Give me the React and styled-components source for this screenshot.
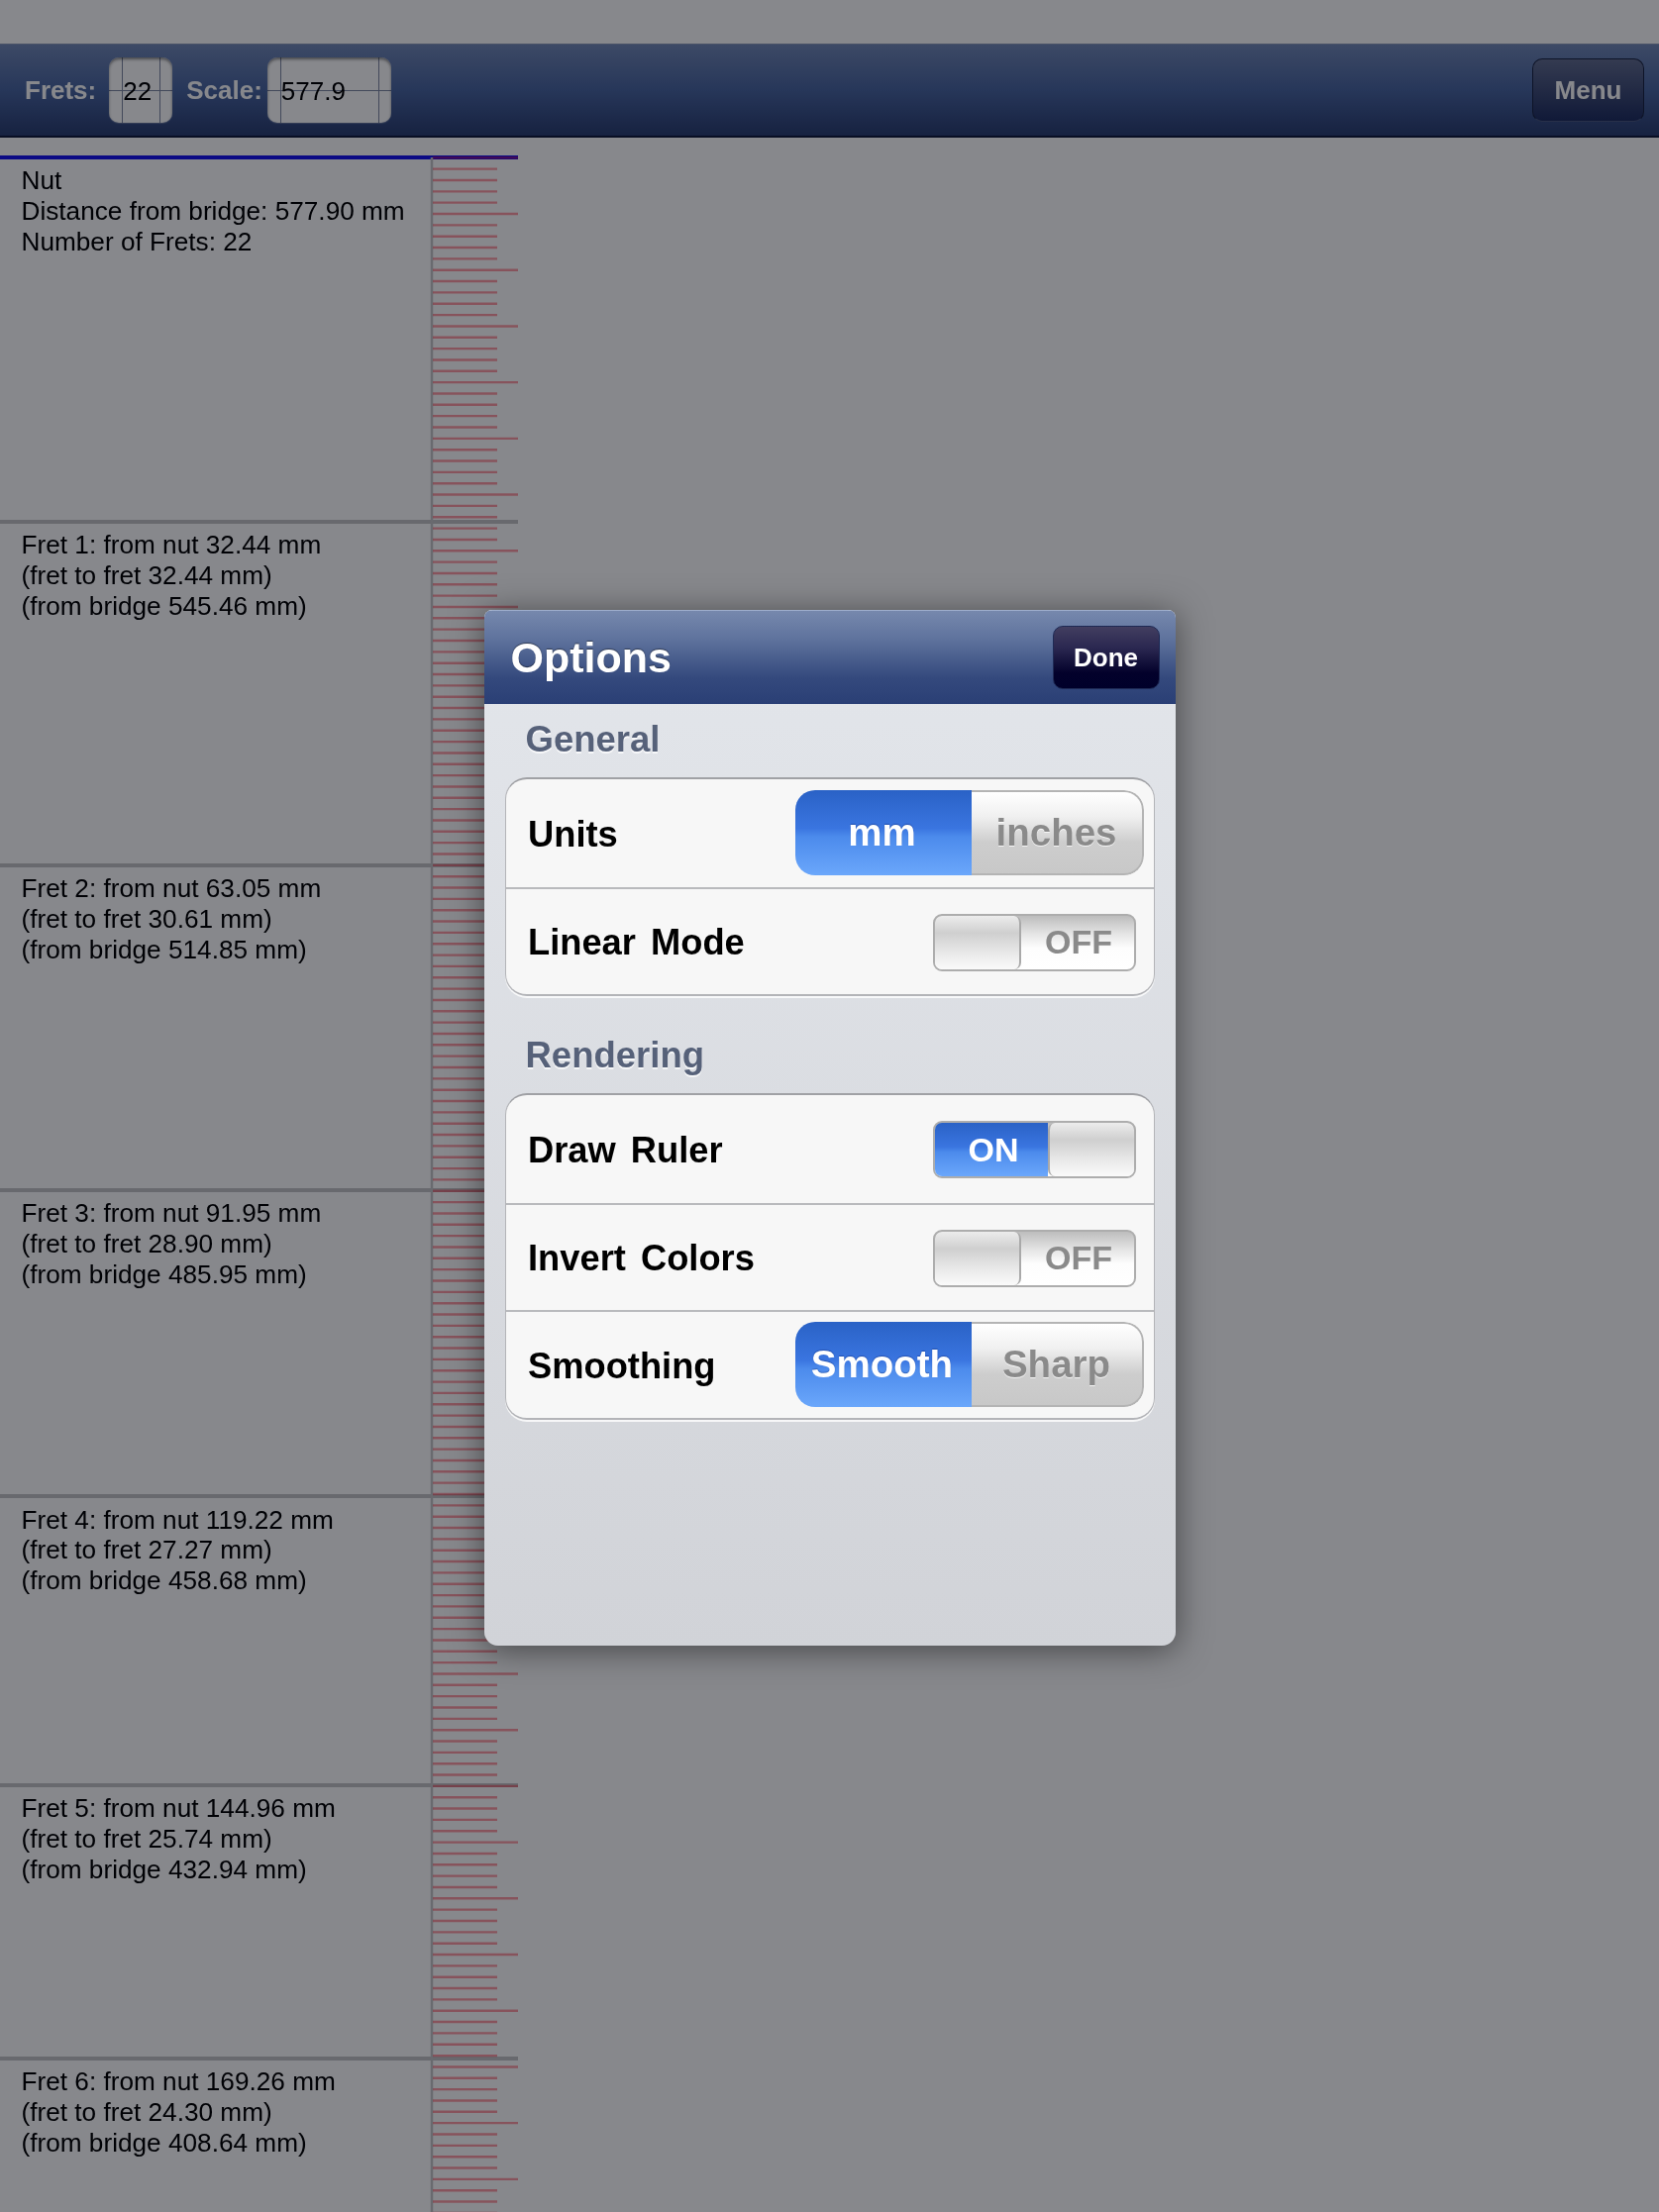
import React from "react";
import styled, { createGlobalStyle } from "styled-components";

const MM = 11.342;
const NUT_Y = 20.3; // nut centre, measured from the top of the sheet
const TICK_COUNT = 186;

const frets = [
  { lines: ["Nut", "Distance from bridge: 577.90 mm", "Number of Frets: 22"], at: 0, nut: true },
  { lines: ["Fret 1: from nut 32.44 mm", "(fret to fret 32.44 mm)", "(from bridge 545.46 mm)"], at: 32.44 },
  { lines: ["Fret 2: from nut 63.05 mm", "(fret to fret 30.61 mm)", "(from bridge 514.85 mm)"], at: 63.05 },
  { lines: ["Fret 3: from nut 91.95 mm", "(fret to fret 28.90 mm)", "(from bridge 485.95 mm)"], at: 91.95 },
  { lines: ["Fret 4: from nut 119.22 mm", "(fret to fret 27.27 mm)", "(from bridge 458.68 mm)"], at: 119.22 },
  { lines: ["Fret 5: from nut 144.96 mm", "(fret to fret 25.74 mm)", "(from bridge 432.94 mm)"], at: 144.96 },
  { lines: ["Fret 6: from nut 169.26 mm", "(fret to fret 24.30 mm)", "(from bridge 408.64 mm)"], at: 169.26 },
];

const GlobalStyle = createGlobalStyle`
  html, body {
    margin: 0;
    padding: 0;
    background: #fff;
  }
  body {
    font-family: "Liberation Sans", Arial, sans-serif;
    overflow: hidden;
  }
`;

const Screen = styled.div`
  position: relative;
  width: 1675px;
  height: 2234px;
  overflow: hidden;
  background: #fff;
  filter: blur(0.6px);
`;

const StatusGap = styled.div`
  height: 44px;
  background: #fff;
`;

const NavBar = styled.div`
  display: flex;
  align-items: center;
  height: 95px;
  box-sizing: border-box;
  padding: 0 15px 0 25px;
  background: linear-gradient(#7389b7 0%, #4a66a0 50%, #2b3e70 100%);
  border-bottom: 2px solid #101a3a;
  border-top: 1px solid #8c9bbb;
`;

const NavLabel = styled.span`
  font-size: 26px;
  font-weight: 700;
  color: #fff;
  margin-right: ${(p) => p.$gap}px;
`;

const Field = styled.div`
  width: ${(p) => p.$width}px;
  height: 66px;
  box-sizing: border-box;
  margin-right: ${(p) => p.$gap}px;
  padding-left: ${(p) => p.$pad}px;
  border-radius: 10px;
  font-size: 26px;
  line-height: 68px;
  color: #000;
  background-color: #fff;
  background-image:
    linear-gradient(#7f88a2, #7f88a2),
    linear-gradient(#7f88a2, #7f88a2),
    linear-gradient(#7f88a2, #7f88a2);
  background-repeat: no-repeat;
  background-size: 1px 100%, 1px 100%, 100% 1px;
  background-position: 13px 0, calc(100% - 12px) 0, 0 33px;
  box-shadow: inset 0 2px 3px rgba(0, 0, 0, 0.45), 0 1px 1px rgba(255, 255, 255, 0.25);
`;

const MenuButton = styled.button`
  width: 113px;
  height: 64px;
  margin-left: auto;
  padding: 0;
  border: 1px solid #1a2340;
  border-bottom-color: #4c5a80;
  border-radius: 10px;
  font: 700 26px "Liberation Sans", Arial, sans-serif;
  color: #fff;
  background: linear-gradient(#636e90, #1f2e60);
`;

const Sheet = styled.div`
  position: relative;
  width: 523px;
  padding-top: 18px;
`;

const FretBlock = styled.div`
  box-sizing: border-box;
  padding: 6.4px 0 0 21.5px;
  border-top: 4px solid ${(p) => (p.$nut ? "#1512f0" : "#c4c4c6")};
  font-size: 26.2px;
  line-height: 30.7px;
  color: #000;
`;

const RulerDrawing = styled.svg`
  position: absolute;
  top: 0;
  left: 0;
  width: 523px;
  height: 2095px;
`;

const Dim = styled.div`
  position: absolute;
  inset: 0;
  display: flex;
  align-items: center;
  justify-content: center;
  padding-top: 44px;
  background: rgba(0, 2, 10, 0.47);
`;

const Popover = styled.div`
  width: 698px;
  height: 1046px;
  display: flex;
  flex-direction: column;
  border-radius: 8px 8px 14px 14px;
  background: linear-gradient(#e3e6eb, #d1d3d8);
  box-shadow: 0 4px 34px rgba(0, 0, 0, 0.5);
  overflow: hidden;
`;

const PopoverBar = styled.div`
  display: flex;
  align-items: center;
  justify-content: space-between;
  height: 95px;
  flex: none;
  box-sizing: border-box;
  padding: 0 16px 0 27px;
  border-top: 1px solid #9dadcb;
  background: linear-gradient(#7688ad 0%, #5f739d 30%, #34497d 72%, #2a3f75 100%);
`;

const PopoverTitle = styled.span`
  font-size: 43px;
  font-weight: 700;
  color: #fff;
  text-shadow: 0 -1px 1px rgba(0, 0, 0, 0.45);
`;

const DoneButton = styled.button`
  width: 108px;
  height: 64px;
  padding: 0;
  border: 1px solid #1e2a55;
  border-radius: 10px;
  font: 700 26px "Liberation Sans", Arial, sans-serif;
  color: #fff;
  background: linear-gradient(#423e60 0%, #2a2750 35%, #03012b 75%, #00002a 100%);
`;

const Section = styled.section`
  padding: ${(p) => (p.$first ? 0 : 24)}px 21px 0;
`;

const SectionTitle = styled.h2`
  margin: 15px 0 17px 21px;
  font-size: 36.5px;
  line-height: 42px;
  font-weight: 700;
  color: #566179;
  text-shadow: 0 2px 0 rgba(255, 255, 255, 0.75);
`;

const Group = styled.div`
  box-sizing: border-box;
  border: 1px solid #b3b4b8;
  border-top: 2px solid #a0a1a5;
  border-bottom-width: 2px;
  border-radius: 22px;
  background: #f7f7f7;
  box-shadow: 0 2px 0 rgba(255, 255, 255, 0.8);
  overflow: hidden;
`;

const Row = styled.div`
  display: flex;
  align-items: center;
  justify-content: space-between;
  height: 108.5px;
  box-sizing: border-box;
  padding: 0 10px 0 22.5px;
  & + & {
    border-top: 2px solid #b9babd;
  }
`;

const RowLabel = styled.span`
  padding-top: 3px;
  font-size: 36.3px;
  font-weight: 700;
  word-spacing: 5px;
  color: #000;
`;

const Segments = styled.div`
  display: flex;
  width: 352px;
  height: 86px;
  border-radius: 20px;
  overflow: hidden;
`;

const Segment = styled.div`
  display: flex;
  align-items: center;
  justify-content: center;
  box-sizing: border-box;
  font-size: 38.5px;
  font-weight: 700;
  ${(p) =>
    p.$active
      ? `
    width: 178px;
    padding-right: 2px;
    color: #fff;
    background: linear-gradient(#2a62c6 0%, #3a75e0 45%, #4c8bec 55%, #6ba7fb 100%);
    text-shadow: 0 -1px 1px rgba(0, 30, 110, 0.4);
  `
      : `
    flex: 1;
    color: #8a8a8a;
    border: 2px solid #b4b4b4;
    border-left: none;
    border-radius: 0 20px 20px 0;
    background: linear-gradient(#ffffff 0%, #f0f0f0 30%, #cdcdcd 62%, #c8c8c8 100%);
    text-shadow: 0 1px 0 rgba(255, 255, 255, 0.8);
  `}
`;

const SwitchTrack = styled.div`
  display: flex;
  width: 205px;
  height: 58px;
  margin: 2px 8px 0 0;
  box-sizing: border-box;
  border: 2px solid #adadad;
  border-radius: 9px;
  overflow: hidden;
  background: linear-gradient(#bdbdbd 0%, #e6e6e6 35%, #fdfdfd 60%, #ffffff 100%);
`;

const SwitchThumb = styled.div`
  width: 87px;
  flex: none;
  box-sizing: border-box;
  ${(p) => (p.$right ? "border-left" : "border-right")}: 2px solid #a9a9a9;
  border-radius: 7px;
  background: linear-gradient(#ececec 0%, #cfcfcf 32%, #e9e9e9 70%, #fafafa 100%);
`;

const SwitchText = styled.div`
  flex: 1;
  display: flex;
  align-items: center;
  justify-content: center;
  font-size: 34px;
  font-weight: 700;
  ${(p) =>
    p.$on
      ? `
    padding-left: 5px;
    color: #fff;
    background: linear-gradient(#2a62c6 0%, #3a75e0 45%, #4c8bec 55%, #6ba7fb 100%);
  `
      : `
    padding-left: 3px;
    color: #8a8a8a;
  `}
`;

const Switch = ({ on }) => (
  <SwitchTrack>
    {on ? (
      <>
        <SwitchText $on>ON</SwitchText>
        <SwitchThumb $right />
      </>
    ) : (
      <>
        <SwitchThumb />
        <SwitchText>OFF</SwitchText>
      </>
    )}
  </SwitchTrack>
);

const Ruler = () => {
  const ticks = [];
  for (let i = 0; i < TICK_COUNT; i++) {
    const y = NUT_Y + i * MM;
    ticks.push(
      <line key={i} x1="437" x2={i % 5 === 0 ? 523 : 502} y1={y} y2={y} />
    );
  }
  return (
    <RulerDrawing viewBox="0 0 523 2095">
      <line x1="436" x2="436" y1="20" y2="2095" stroke="#c6c6c8" strokeWidth="2.5" />
      <g stroke="rgba(255, 20, 40, 0.42)" strokeWidth="2.4">
        {ticks}
      </g>
    </RulerDrawing>
  );
};

const App = () => {
  return (
    <Screen>
      <GlobalStyle />
      <StatusGap />
      <NavBar>
        <NavLabel $gap={13}>Frets:</NavLabel>
        <Field $width={64} $gap={14} $pad={14}>22</Field>
        <NavLabel $gap={5}>Scale:</NavLabel>
        <Field $width={125} $gap={0} $pad={14}>577.9</Field>
        <MenuButton>Menu</MenuButton>
      </NavBar>
      <Sheet>
        {frets.map((fret, i) => {
          const next = frets[i + 1] ? frets[i + 1].at : fret.at + 23;
          return (
            <FretBlock
              key={fret.at}
              $nut={fret.nut}
              style={{ height: (next - fret.at) * MM }}
            >
              {fret.lines.map((line) => (
                <div key={line}>{line}</div>
              ))}
            </FretBlock>
          );
        })}
        <Ruler />
      </Sheet>
      <Dim>
        <Popover>
          <PopoverBar>
            <PopoverTitle>Options</PopoverTitle>
            <DoneButton>Done</DoneButton>
          </PopoverBar>
          <Section $first>
            <SectionTitle>General</SectionTitle>
            <Group>
              <Row>
                <RowLabel>Units</RowLabel>
                <Segments>
                  <Segment $active>mm</Segment>
                  <Segment>inches</Segment>
                </Segments>
              </Row>
              <Row>
                <RowLabel>Linear Mode</RowLabel>
                <Switch />
              </Row>
            </Group>
          </Section>
          <Section>
            <SectionTitle>Rendering</SectionTitle>
            <Group>
              <Row>
                <RowLabel>Draw Ruler</RowLabel>
                <Switch on />
              </Row>
              <Row>
                <RowLabel>Invert Colors</RowLabel>
                <Switch />
              </Row>
              <Row>
                <RowLabel>Smoothing</RowLabel>
                <Segments>
                  <Segment $active>Smooth</Segment>
                  <Segment>Sharp</Segment>
                </Segments>
              </Row>
            </Group>
          </Section>
        </Popover>
      </Dim>
    </Screen>
  );
};

export default App;
